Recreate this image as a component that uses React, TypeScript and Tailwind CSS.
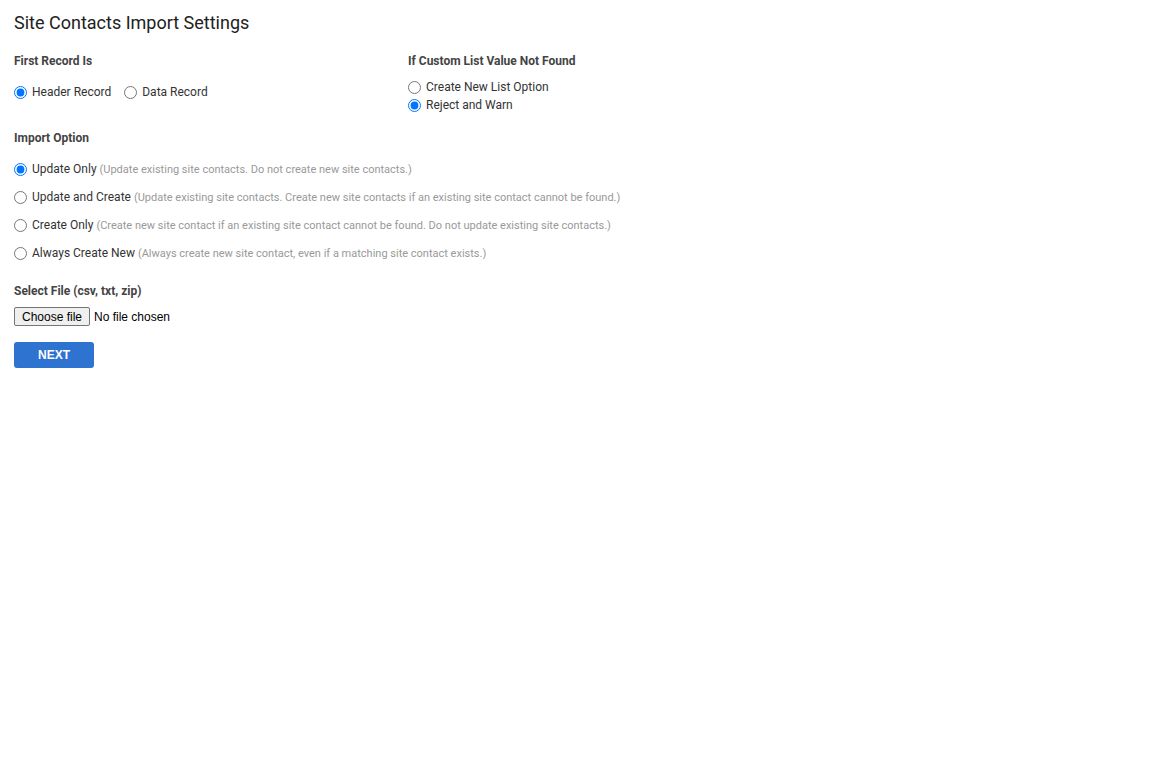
import { useState } from "react"

const importOptions = [
  {
    id: "update",
    label: "Update Only",
    hint: "(Update existing site contacts. Do not create new site contacts.)",
  },
  {
    id: "updateCreate",
    label: "Update and Create",
    hint: "(Update existing site contacts. Create new site contacts if an existing site contact cannot be found.)",
  },
  {
    id: "create",
    label: "Create Only",
    hint: "(Create new site contact if an existing site contact cannot be found. Do not update existing site contacts.)",
  },
  {
    id: "always",
    label: "Always Create New",
    hint: "(Always create new site contact, even if a matching site contact exists.)",
  },
]

function Radio({
  name,
  checked,
  onChange,
  children,
}: {
  name: string
  checked: boolean
  onChange: () => void
  children: React.ReactNode
}) {
  return (
    <label className="flex items-center cursor-pointer">
      <input
        type="radio"
        name={name}
        checked={checked}
        onChange={onChange}
        className="m-0 mr-[5px] h-[13px] w-[13px] accent-[#0075ff]"
      />
      {children}
    </label>
  )
}

export default function App() {
  const [firstRecord, setFirstRecord] = useState("header")
  const [customList, setCustomList] = useState("reject")
  const [importOption, setImportOption] = useState("update")
  const [fileName, setFileName] = useState("")

  return (
    <div className="min-h-screen bg-white px-[14px] pt-[12px] font-['Roboto',sans-serif] text-[12px] text-[#333]">
      <h1 className="text-[18px] leading-[22px] text-[#212121]">
        Site Contacts Import Settings
      </h1>

      {/* First record + custom list */}
      <div className="mt-[19px] flex">
        <div className="w-[394px]">
          <h3 className="text-[12px] font-bold leading-[16px] text-[#444]">
            First Record Is
          </h3>
          <div className="mt-[14px] flex gap-[13px]">
            <Radio
              name="first"
              checked={firstRecord === "header"}
              onChange={() => setFirstRecord("header")}
            >
              Header Record
            </Radio>
            <Radio
              name="first"
              checked={firstRecord === "data"}
              onChange={() => setFirstRecord("data")}
            >
              Data Record
            </Radio>
          </div>
        </div>
        <div>
          <h3 className="text-[12px] font-bold leading-[16px] text-[#444]">
            If Custom List Value Not Found
          </h3>
          <div className="mt-[9px] flex flex-col">
            <Radio
              name="custom"
              checked={customList === "create"}
              onChange={() => setCustomList("create")}
            >
              Create New List Option
            </Radio>
            <Radio
              name="custom"
              checked={customList === "reject"}
              onChange={() => setCustomList("reject")}
            >
              Reject and Warn
            </Radio>
          </div>
        </div>
      </div>

      {/* Import option */}
      <h3 className="mt-[16px] text-[12px] font-bold leading-[16px] text-[#444]">
        Import Option
      </h3>
      <div className="mt-[16px] flex flex-col gap-[13px]">
        {importOptions.map((o) => (
          <Radio
            key={o.id}
            name="import"
            checked={importOption === o.id}
            onChange={() => setImportOption(o.id)}
          >
            <span className="leading-[14px]">
              {o.label}{" "}
              <span className="text-[11px] text-[#999]">{o.hint}</span>
            </span>
          </Radio>
        ))}
      </div>

      {/* File */}
      <h3 className="mt-[22px] text-[12px] font-bold leading-[16px] text-[#444]">
        Select File (csv, txt, zip)
      </h3>
      <label className="mt-[8px] flex h-[19px] w-fit cursor-pointer items-center font-['Liberation_Sans',Arial,sans-serif] text-[12px] text-black">
        <span className="flex h-[19px] w-[76px] items-center justify-center rounded-[2px] border border-[#767676] bg-[#efefef]">
          Choose file
        </span>
        <span className="ml-[4px]">{fileName || "No file chosen"}</span>
        <input
          type="file"
          accept=".csv,.txt,.zip"
          className="sr-only"
          onChange={(e) => setFileName(e.target.files?.[0]?.name ?? "")}
        />
      </label>

      <button className="mt-[16px] block h-[26px] w-[80px] rounded-[3px] bg-[#2f73d1] font-['Liberation_Sans',Arial,sans-serif] text-[12px] font-bold text-white">
        NEXT
      </button>
    </div>
  )
}
